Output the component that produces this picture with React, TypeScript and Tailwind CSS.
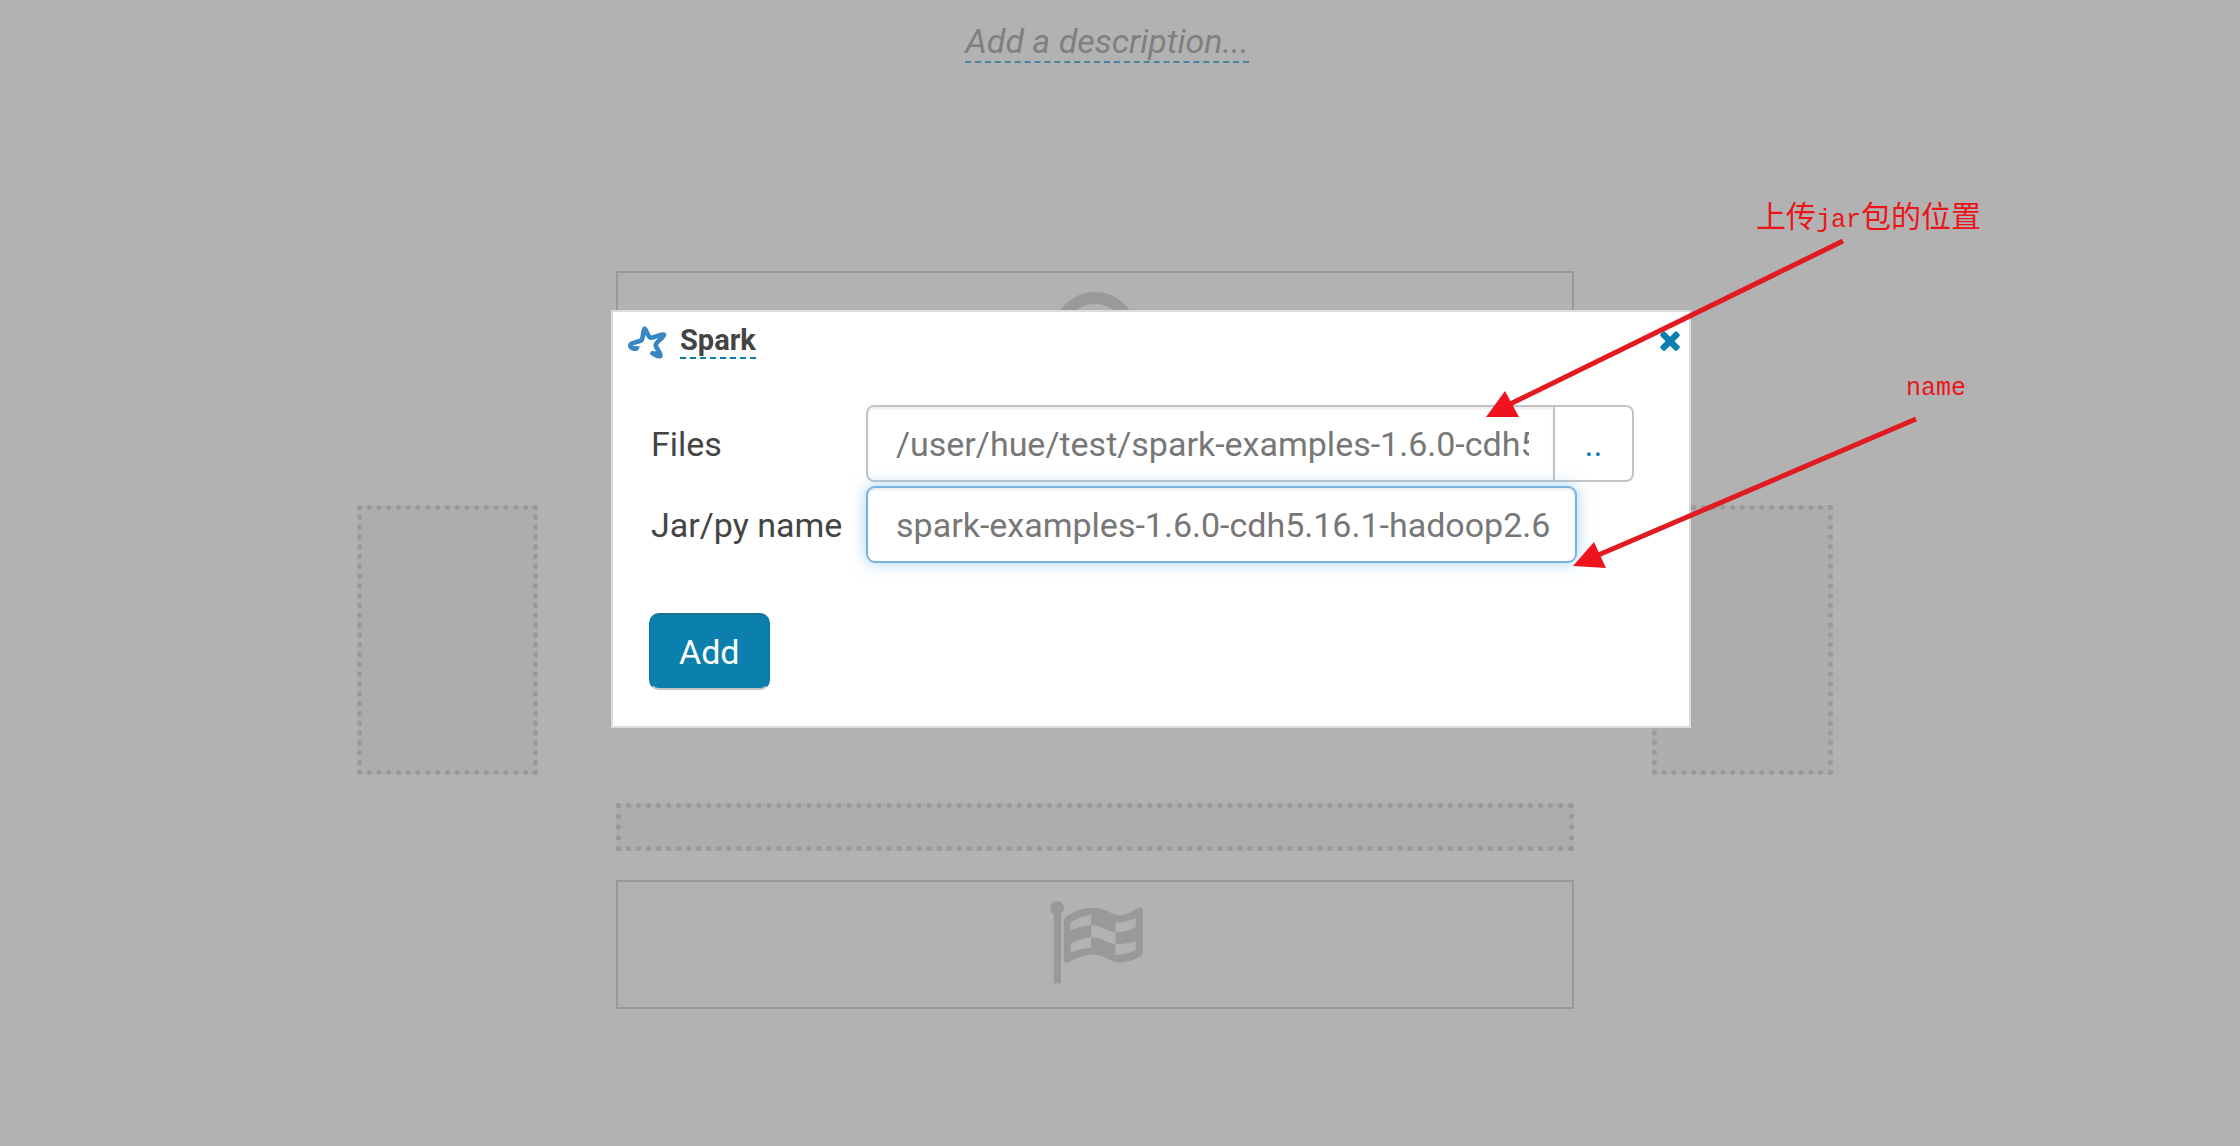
import React, { useState } from "react";

const SparkLogo: React.FC = () => (
  <svg viewBox="0 0 120 105" className="w-10 h-[35px] mt-1 shrink-0" fill="none" aria-hidden="true">
    <path
      d="M29 70 C22 73 9 68 10 60 C11 53 36 52 44 45 C49 38 47 20 53 11 C60 17 61 35 71 38 C82 40 100 25 111 29 C107 41 87 50 86 61 C87 71 103 83 100 93 C93 97 83 89 76 85"
      stroke="#3687c3"
      strokeWidth="14"
      strokeLinecap="round"
      strokeLinejoin="round"
    />
    <path d="M24 77 L42 64 L24 64 Z M72 80 L90 78 L98 92 L84 95 Z" fill="#3687c3" />
  </svg>
);

const CloseIcon: React.FC = () => (
  <svg viewBox="302 344 1188 1210" className="w-5 h-5" fill="currentColor" aria-hidden="true">
    <path d="M1490 1322q0 40-28 68l-136 136q-28 28-68 28t-68-28l-294-294-294 294q-28 28-68 28t-68-28l-136-136q-28-28-28-68t28-68l294-294-294-294q-28-28-28-68t28-68l136-136q28-28 68-28t68 28l294 294 294-294q28-28 68-28t68 28l136 136q28 28 28 68t-28 68l-294 294 294 294q28 28 28 68z" />
  </svg>
);

const StartIcon: React.FC = () => (
  <svg viewBox="0 0 84 84" className="w-[84px] h-[84px]" aria-hidden="true">
    <circle cx="42" cy="42" r="36" fill="none" stroke="#999999" strokeWidth="12" />
    <circle cx="42" cy="42" r="14" fill="#999999" />
  </svg>
);

const FlagIcon: React.FC = () => (
  <svg viewBox="0 0 280 250" className="w-[93px] h-[83px]" fill="#999999" aria-hidden="true">
    <circle cx="21" cy="21" r="21" />
    <path d="M11 30 H33 V248 H11 Z" />
    <path
      fillRule="evenodd"
      d="M42 58 Q42 50 50 45 Q90 20 130 20 C165 20 185 42 212 42 C236 42 256 24 268 20 Q279 18 280 28 V156 Q280 164 271 168 Q238 185 212 185 C177 185 165 161 130 161 C92 161 66 181 54 186 Q42 187 42 176 Z
      M62 65 V88 Q94 75 124 73 V42 Q94 44 62 65 Z
      M62 128 V157 Q94 142 124 141 V109 Q94 111 62 128 Z
      M124 73 V109 C158 108 170 129 197 129 V95 C170 91 158 74 124 73 Z
      M197 65 V95 Q228 94 258 79 V51 Q226 66 197 65 Z
      M197 129 V163 Q228 162 258 148 V121 Q228 132 197 129 Z"
    />
  </svg>
);

const DropRow: React.FC = () => (
  <div className="h-12 border-[5px] border-dotted border-[#999999] bg-[#adadad]" />
);

const DropColumn: React.FC = () => (
  <div className="w-[181px] h-[270px] shrink-0 border-[5px] border-dotted border-[#999999] bg-[#adadad]" />
);

const Workflow: React.FC = () => (
  <main className="mt-[208px] pr-[50px]">
    <div className="max-w-[1476px] mx-auto flex items-center gap-[78px]">
      <DropColumn />

      <div className="flex-1 min-w-0 flex flex-col gap-[29px]">
        <div className="h-[129px] pt-[19px] flex justify-center items-start border-2 border-[#999999]">
          <StartIcon />
        </div>
        <DropRow />
        <div className="h-[268px]" />
        <DropRow />
        <div className="h-[129px] pt-[19px] pl-[3px] flex justify-center items-start border-2 border-[#999999]">
          <FlagIcon />
        </div>
      </div>

      <DropColumn />
    </div>
  </main>
);

// Red notes and arrows pointing at the two fields, placed relative to the dialog
const Annotations: React.FC = () => (
  <div className="absolute -top-[2px] -left-[2px] text-[#eb1519] pointer-events-none">
    <svg width="1400" height="500" viewBox="0 0 1400 500" className="absolute left-0 -top-[100px] max-w-none" aria-hidden="true">
      <g stroke="#e21a21" strokeWidth="5">
        <path d="M1232 31 L897 195" />
        <path d="M1305 209 L985 346" />
      </g>
      <g fill="#ee131c">
        <path d="M875 207 L894 181 L908 207 Z" />
        <path d="M962 356 L983 332 L995 358 Z" />
      </g>
    </svg>
    <p className="absolute left-[1145px] -top-[118px] whitespace-nowrap text-[30px] leading-[44px] font-['Noto_Sans_CJK_SC',sans-serif]">
      上传<span className="font-['Liberation_Mono',monospace] text-[25px]">jar</span>包的位置
    </p>
    <p className="absolute left-[1295px] top-[63px] whitespace-nowrap font-['Liberation_Mono',monospace] text-[25px] leading-8">
      name
    </p>
  </div>
);

const SparkDialog: React.FC = () => {
  const [files, setFiles] = useState("/user/hue/test/spark-examples-1.6.0-cdh5.16.1-hadoop2.6");
  const [jarName, setJarName] = useState("spark-examples-1.6.0-cdh5.16.1-hadoop2.6");

  return (
    <div className="absolute inset-x-0 top-[310px] pl-[62px] flex justify-center">
      <div role="dialog" aria-label="Spark" className="relative w-full max-w-[1080px] bg-white border-2 border-[#dcdcdc]">
        {/* Header */}
        <div className="flex items-center justify-between h-[57px] pl-[14px] pr-[9px]">
          <div className="flex items-center gap-[13px]">
            <SparkLogo />
            <h2 className="text-[29px] leading-[34px] font-bold border-b-2 border-dashed border-[#0b7fad]">
              Spark
            </h2>
          </div>
          <button type="button" aria-label="Close" className="text-[#0b7fad] cursor-pointer">
            <CloseIcon />
          </button>
        </div>

        {/* Form */}
        <form onSubmit={(e) => e.preventDefault()} className="pt-9 pb-9 pl-9 pr-[55px]">
          <div className="grid grid-cols-[215px_1fr] items-center gap-y-1 pl-[2px]">
            <label htmlFor="files">Files</label>
            <div className="flex">
              <input
                id="files"
                type="text"
                value={files}
                onChange={(e) => setFiles(e.target.value)}
                className="flex-1 min-w-0 h-[77px] pl-7 pr-6 text-[#777777] bg-white border-2 border-[#c4c4c4] rounded-l-[8px] outline-none shadow-[inset_0_2px_3px_rgba(0,0,0,0.08)]"
              />
              <button
                type="button"
                className="w-[79px] h-[77px] text-[#0b7fad] border-2 border-l-0 border-[#c4c4c4] rounded-r-[8px] cursor-pointer"
              >
                ..
              </button>
            </div>

            <label htmlFor="jar-name">Jar/py name</label>
            <input
              id="jar-name"
              type="text"
              value={jarName}
              onChange={(e) => setJarName(e.target.value)}
              className="w-full max-w-[711px] h-[77px] pl-7 pr-5 text-[#777777] bg-white border-2 border-[#77b4e3] rounded-[9px] outline-none shadow-[inset_0_2px_3px_rgba(0,0,0,0.08),0_0_16px_rgba(82,168,236,0.5)]"
            />
          </div>

          <button
            type="submit"
            className="mt-[50px] h-[77px] px-7 text-white bg-[#0b7fad] border-2 border-t-[#1b6f91] border-x-[#0b7aa6] border-b-[#bcc4c8] rounded-[10px] cursor-pointer"
          >
            Add
          </button>
        </form>

        <Annotations />
      </div>
    </div>
  );
};

const App: React.FC = () => {
  return (
    <div className="relative min-h-screen overflow-hidden bg-[#b2b2b2] text-[#444444] text-[34px] leading-10 font-['Roboto',sans-serif]">
      <header className="pt-[21px] pr-[26px] flex justify-center">
        <p className="italic text-[#808080] border-b-2 border-dashed border-[#4a83a0]">
          Add a description...
        </p>
      </header>

      <Workflow />
      <SparkDialog />
    </div>
  );
};

export default App;
